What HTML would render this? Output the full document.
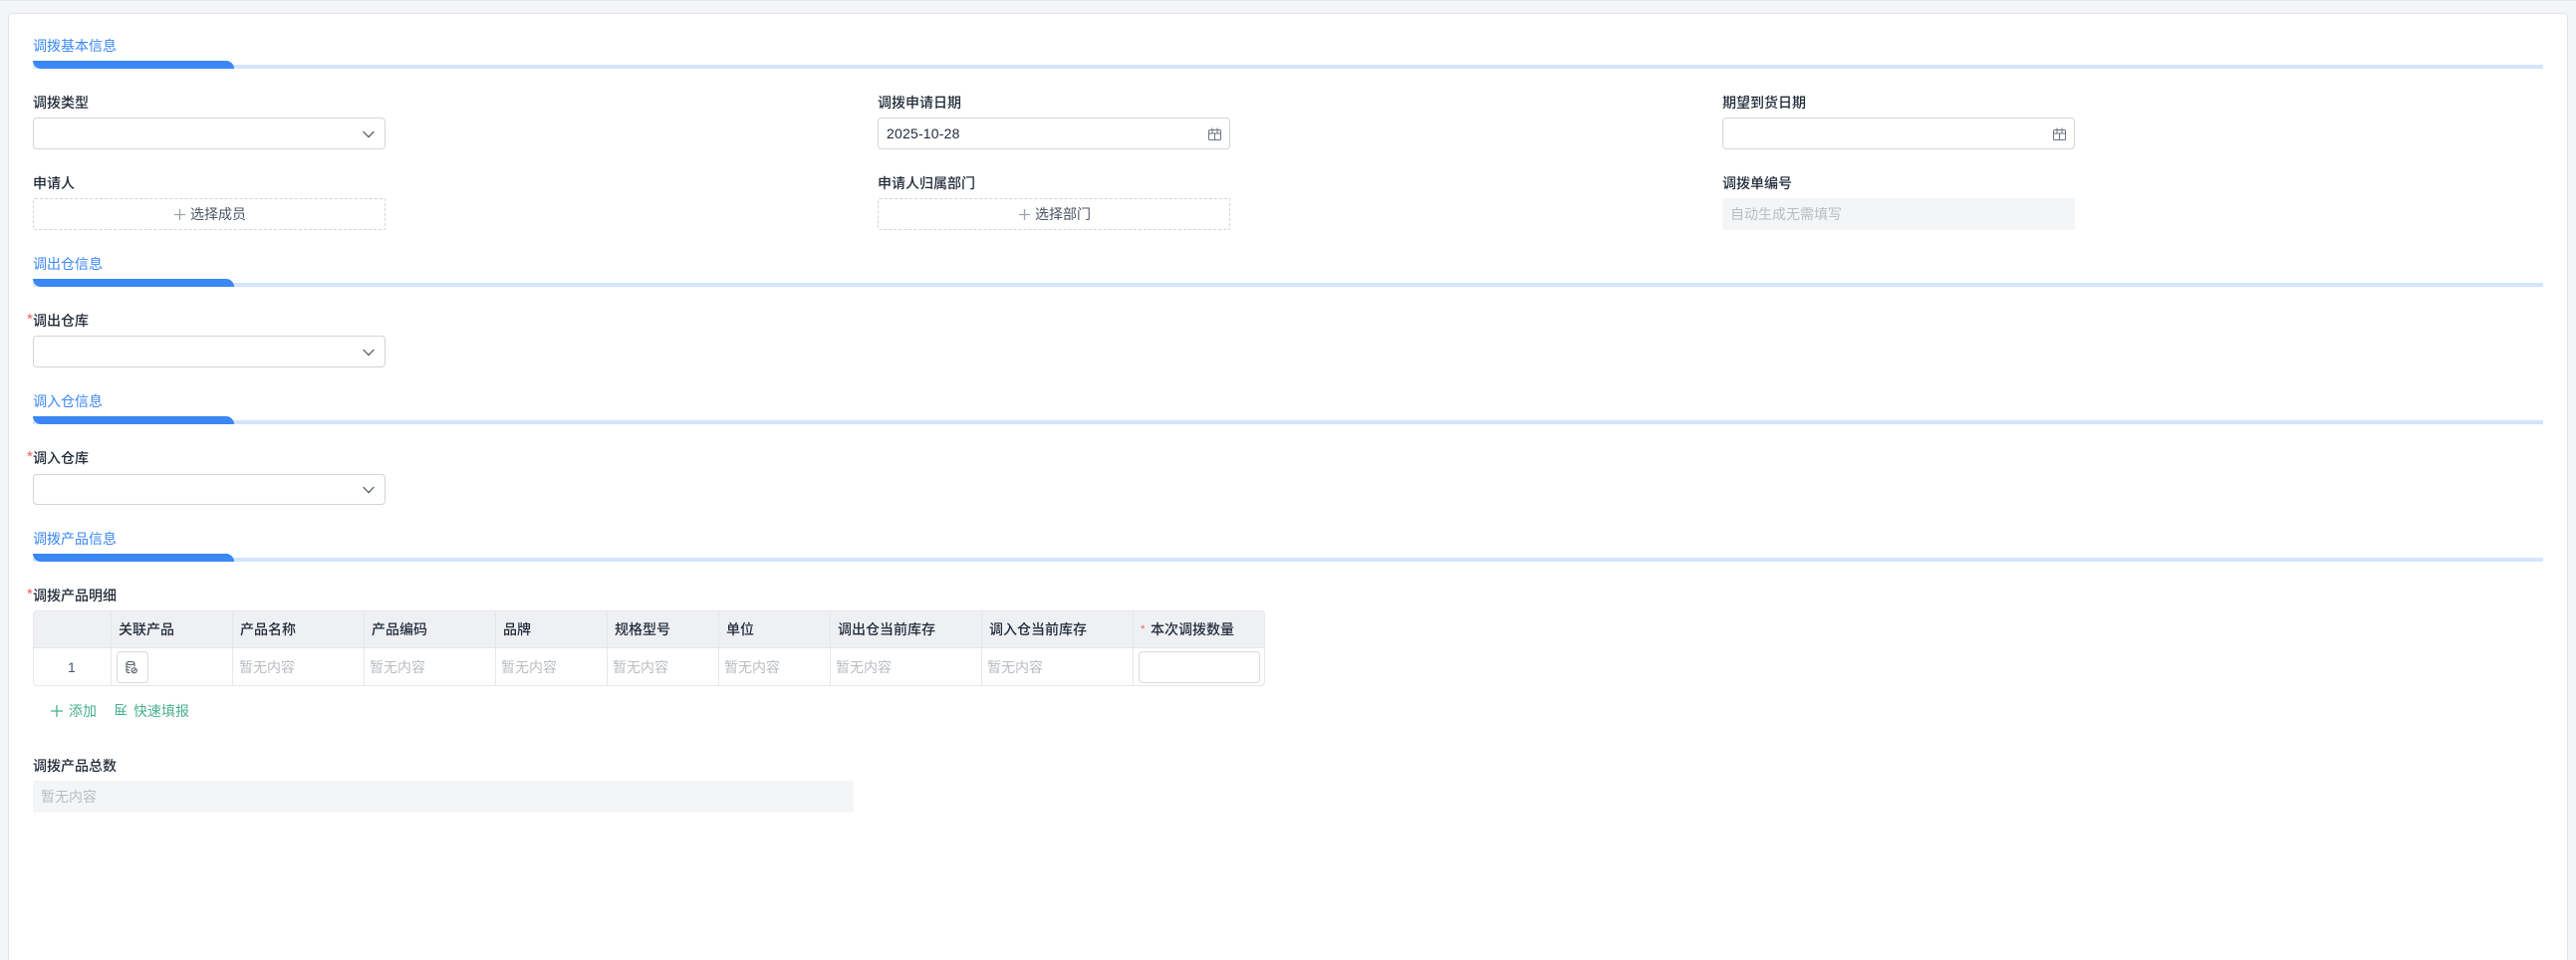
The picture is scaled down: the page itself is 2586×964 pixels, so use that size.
<!DOCTYPE html>
<html lang="zh">
<head>
<meta charset="utf-8">
<title>调拨</title>
<style>
html,body{margin:0;padding:0;width:2586px;height:964px;overflow:hidden}
body{position:relative;background:#f4f5f8;font-family:"Liberation Sans","Noto Sans CJK SC",sans-serif;font-size:14px;color:#1f2937}
#wrap{position:absolute;left:0;top:0;width:2586px;height:964px;overflow:hidden;filter:blur(.3px)}
#strip{position:absolute;left:0;top:0;width:2586px;height:1px;background:#e5e7eb}
#card{position:absolute;left:8px;top:13px;width:2568px;height:951px;background:#fff;border:1px solid #e2e4e8;border-bottom:none;border-radius:4px 4px 0 0;box-sizing:content-box}
.a{position:absolute;box-sizing:border-box}
.t{position:absolute;white-space:nowrap;height:20px;line-height:20px}
.sec{color:#3b87f6;font-weight:400}
.lab{color:#1f2937;font-weight:500}
.bar{position:absolute;left:33px;width:2520px;height:4px;background:#d3e5fd}
.bar2{position:absolute;left:33px;width:202px;height:8px;background:#3b87f6;border-radius:0 8px 0 8px}
.inp{position:absolute;width:354px;height:32px;box-sizing:border-box;background:#fff;border:1px solid #d1d5db;border-radius:4px}
.dash{position:absolute;width:354px;height:32px;box-sizing:border-box;background:#fff;border:1px dashed #d1d5db;border-radius:2px}
.dis{position:absolute;height:32px;background:#f4f5f7;border-radius:2px}
.star{position:absolute;color:#ef5b5b;font-size:15px;line-height:14px;height:14px}
.ph{color:#b9bcc2}
.g{color:#4b5563}
svg{position:absolute;display:block;overflow:visible}
.th{color:#1f2937;font-weight:500}
.v{position:absolute;width:1px;top:613px;height:76px;background:#e5e7eb}
.green{color:#46b08e}
</style>
</head>
<body>
<div id="wrap">
<div id="strip"></div>
<div id="card"></div>

<!-- Section 1 -->
<div class="t sec" style="left:33px;top:36px">调拨基本信息</div>
<div class="bar" style="top:65px"></div><div class="bar2" style="top:61px"></div>

<div class="t lab" style="left:33px;top:93px">调拨类型</div>
<div class="inp" style="left:33px;top:118px"></div>
<svg style="left:364px;top:131px" width="12" height="8" viewBox="0 0 12 8"><path d="M.6 1 6 6.6 11.4 1" fill="none" stroke="#4b5563" stroke-width="1.2"/></svg>

<div class="t lab" style="left:881px;top:93px">调拨申请日期</div>
<div class="inp" style="left:881px;top:118px"></div>
<div class="t" style="left:890px;top:124px;color:#1f2937;letter-spacing:.2px">2025-10-28</div>
<svg style="left:1213px;top:128px" width="13" height="13" viewBox="0 0 13 13"><path d="M1.500 2.500h10a1 1 0 0 1 1 1v8a1 1 0 0 1-1 1h-10a1 1 0 0 1-1-1v-8a1 1 0 0 1 1-1zM.5 6h12M4 .5v5M9 .5v5M6.500 6v6.500" fill="none" stroke="#6b7280" stroke-width="1"/></svg>

<div class="t lab" style="left:1729px;top:93px">期望到货日期</div>
<div class="inp" style="left:1729px;top:118px"></div>
<svg style="left:2061px;top:128px" width="13" height="13" viewBox="0 0 13 13"><path d="M1.500 2.500h10a1 1 0 0 1 1 1v8a1 1 0 0 1-1 1h-10a1 1 0 0 1-1-1v-8a1 1 0 0 1 1-1zM.5 6h12M4 .5v5M9 .5v5M6.500 6v6.500" fill="none" stroke="#6b7280" stroke-width="1"/></svg>

<div class="t lab" style="left:33px;top:174px">申请人</div>
<div class="dash" style="left:33px;top:199px"></div>
<svg style="left:175px;top:210px" width="11" height="11" viewBox="0 0 11 11"><path d="M5.500 0v11M0 5.500h11" stroke="#9ca3af" stroke-width="1.300"/></svg>
<div class="t g" style="left:191px;top:205px">选择成员</div>

<div class="t lab" style="left:881px;top:174px">申请人归属部门</div>
<div class="dash" style="left:881px;top:199px"></div>
<svg style="left:1023px;top:210px" width="11" height="11" viewBox="0 0 11 11"><path d="M5.500 0v11M0 5.500h11" stroke="#9ca3af" stroke-width="1.300"/></svg>
<div class="t g" style="left:1039px;top:205px">选择部门</div>

<div class="t lab" style="left:1729px;top:174px">调拨单编号</div>
<div class="dis" style="left:1729px;top:199px;width:354px"></div>
<div class="t ph" style="left:1737px;top:205px">自动生成无需填写</div>

<!-- Section 2 -->
<div class="t sec" style="left:33px;top:255px">调出仓信息</div>
<div class="bar" style="top:284px"></div><div class="bar2" style="top:280px"></div>
<div class="star" style="left:27px;top:314px">*</div>
<div class="t lab" style="left:33px;top:312px">调出仓库</div>
<div class="inp" style="left:33px;top:337px"></div>
<svg style="left:364px;top:350px" width="12" height="8" viewBox="0 0 12 8"><path d="M.6 1 6 6.6 11.4 1" fill="none" stroke="#4b5563" stroke-width="1.2"/></svg>

<!-- Section 3 -->
<div class="t sec" style="left:33px;top:393px">调入仓信息</div>
<div class="bar" style="top:422px"></div><div class="bar2" style="top:418px"></div>
<div class="star" style="left:27px;top:452px">*</div>
<div class="t lab" style="left:33px;top:450px">调入仓库</div>
<div class="inp" style="left:33px;top:476px;height:31px"></div>
<svg style="left:364px;top:488px" width="12" height="8" viewBox="0 0 12 8"><path d="M.6 1 6 6.6 11.4 1" fill="none" stroke="#4b5563" stroke-width="1.2"/></svg>

<!-- Section 4 -->
<div class="t sec" style="left:33px;top:531px">调拨产品信息</div>
<div class="bar" style="top:560px"></div><div class="bar2" style="top:556px"></div>
<div class="star" style="left:27px;top:590px">*</div>
<div class="t lab" style="left:33px;top:588px">调拨产品明细</div>

<!-- Table -->
<div class="a" style="left:33px;top:613px;width:1237px;height:76px;border:1px solid #e5e7eb;border-radius:4px;background:#fff;overflow:hidden">
  <div class="a" style="left:0;top:0;width:1235px;height:37px;background:#eff0f4;border-bottom:1px solid #e5e7eb"></div>
</div>
<div class="v" style="left:111px"></div>
<div class="v" style="left:233px"></div>
<div class="v" style="left:365px"></div>
<div class="v" style="left:497px"></div>
<div class="v" style="left:609px"></div>
<div class="v" style="left:721px"></div>
<div class="v" style="left:833px"></div>
<div class="v" style="left:985px"></div>
<div class="v" style="left:1137px"></div>

<div class="t th" style="left:119px;top:622px">关联产品</div>
<div class="t th" style="left:241px;top:622px">产品名称</div>
<div class="t th" style="left:373px;top:622px">产品编码</div>
<div class="t th" style="left:505px;top:622px">品牌</div>
<div class="t th" style="left:617px;top:622px">规格型号</div>
<div class="t th" style="left:729px;top:622px">单位</div>
<div class="t th" style="left:841px;top:622px">调出仓当前库存</div>
<div class="t th" style="left:993px;top:622px">调入仓当前库存</div>
<div class="star" style="left:1145px;top:625px;font-size:11px">*</div>
<div class="t th" style="left:1155px;top:622px">本次调拨数量</div>

<div class="t g" style="left:68px;top:660px">1</div>
<div class="a" style="left:117px;top:654px;width:32px;height:32px;border:1px solid #d9dbe0;border-radius:4px;background:#fff"></div>
<svg style="left:126px;top:664px" width="12" height="13" viewBox="0 0 12 13"><g fill="none" stroke="#4b5563" stroke-width="1"><ellipse cx="5" cy="2" rx="4" ry="1.600"/><path d="M1 2v8c0 1 1.500 1.600 3.500 1.600M9 2v3.500M1 4.700c0 1 1.800 1.500 4 1.500M1 7.500c0 1 1.500 1.500 3 1.500"/><circle cx="8.700" cy="9.300" r="2.600"/><path d="M7.400 10.500l2.600-2.400"/></g></svg>
<div class="t ph" style="left:240px;top:660px">暂无内容</div>
<div class="t ph" style="left:371px;top:660px">暂无内容</div>
<div class="t ph" style="left:503px;top:660px">暂无内容</div>
<div class="t ph" style="left:615px;top:660px">暂无内容</div>
<div class="t ph" style="left:727px;top:660px">暂无内容</div>
<div class="t ph" style="left:839px;top:660px">暂无内容</div>
<div class="t ph" style="left:991px;top:660px">暂无内容</div>
<div class="a" style="left:1143px;top:654px;width:122px;height:32px;border:1px solid #d9dbe0;border-radius:4px;background:#fff"></div>

<!-- Actions -->
<svg style="left:51px;top:708px" width="12" height="12" viewBox="0 0 12 12"><path d="M6 0v12M0 6h12" stroke="#46b08e" stroke-width="1.300"/></svg>
<div class="t green" style="left:69px;top:704px">添加</div>
<svg style="left:116px;top:707px" width="12" height="11" viewBox="0 0 12 11"><path d="M7.500.5H.5v10h10.500M.5 4h5M.5 7.200h10M4 4v6.500M7.500 4v6.500M6.500 5.500 11 1" fill="none" stroke="#46b08e" stroke-width="1"/></svg>
<div class="t green" style="left:134px;top:704px">快速填报</div>

<!-- Total -->
<div class="t lab" style="left:33px;top:759px">调拨产品总数</div>
<div class="dis" style="left:33px;top:784px;width:824px"></div>
<div class="t ph" style="left:41px;top:790px">暂无内容</div>
</div>
</body>
</html>
